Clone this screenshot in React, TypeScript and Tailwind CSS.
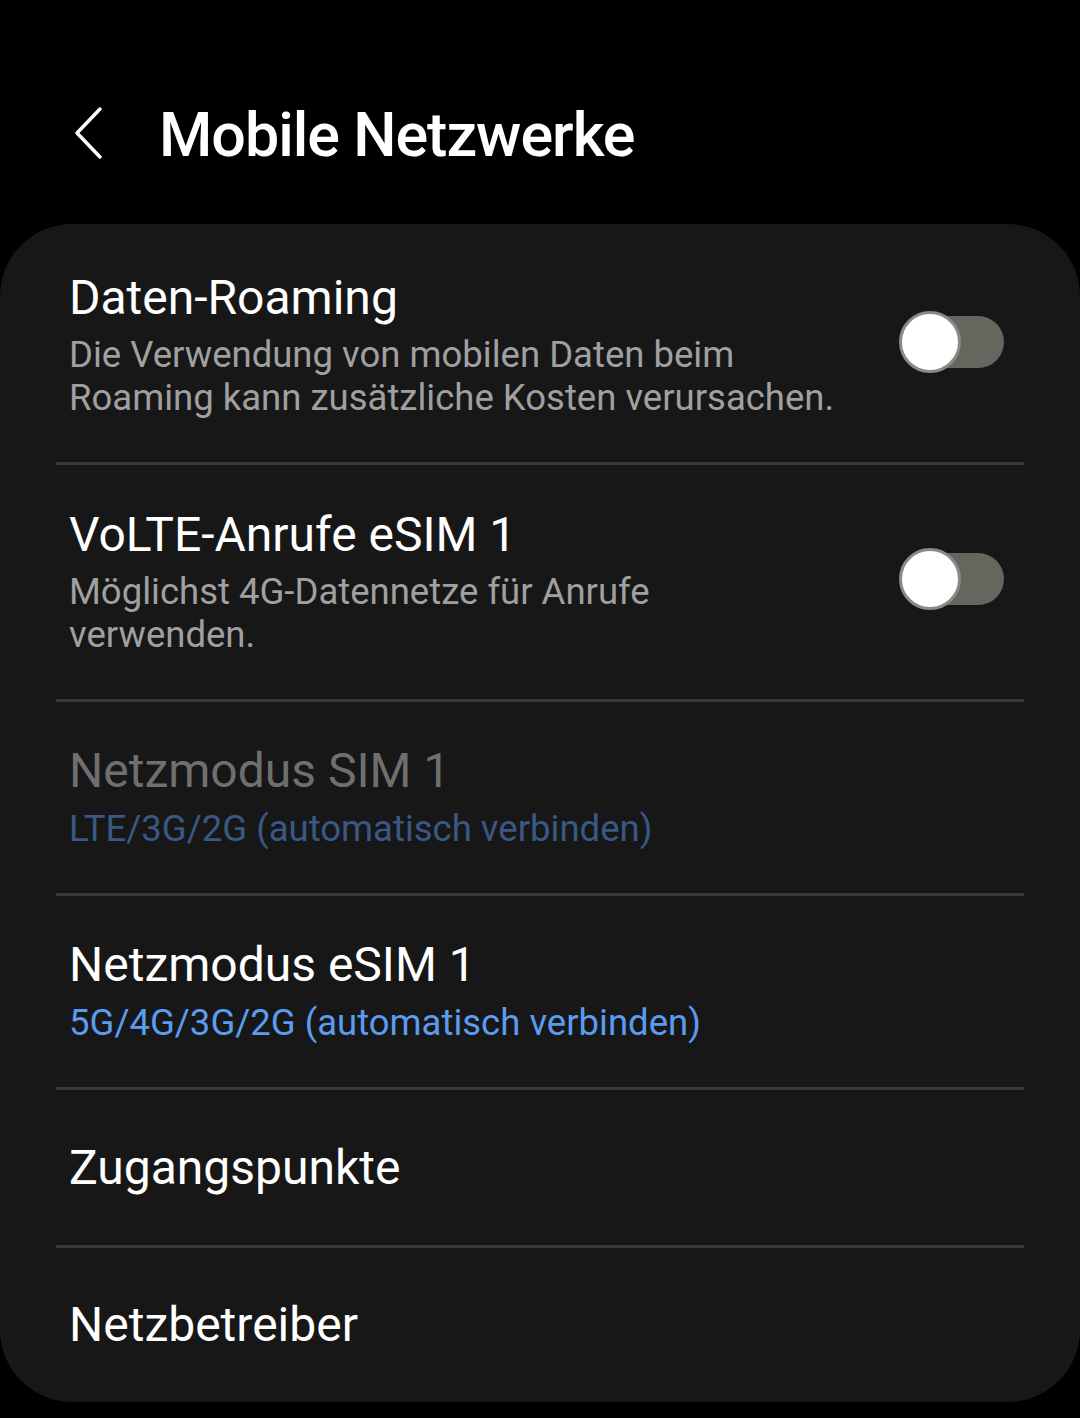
export default function App() {
  return (
    <div className="min-h-[1418px] w-[1080px] bg-black font-['Roboto',sans-serif]">
      <div className="flex h-[224px] items-start pl-[72px] pt-[104px]">
        <svg width="34" height="54" viewBox="0 0 34 54" className="mt-[2px]">
          <path d="M28 3 L5 27 L28 51" fill="none" stroke="#fff" strokeWidth="3.5" strokeLinecap="round" strokeLinejoin="round" />
        </svg>
        <h1 className="ml-[53px] text-[61px] font-medium leading-[62px] tracking-[-1px] text-white">Mobile Netzwerke</h1>
      </div>

      <div className="rounded-[72px] bg-[#171717]">
        <ToggleRow
          title="Daten-Roaming"
          lines={["Die Verwendung von mobilen Daten beim", "Roaming kann zusätzliche Kosten verursachen."]}
          rowClass="h-[238px] pt-[47px]"
        />
        <Divider />
        <ToggleRow
          title="VoLTE-Anrufe eSIM 1"
          lines={["Möglichst 4G-Datennetze für Anrufe", "verwenden."]}
          rowClass="h-[234px] pt-[43px]"
        />
        <Divider />
        <div className="h-[191px] px-[69px] pt-[42px]">
          <p className="text-[48px] leading-[54px] text-[#6f6f6f]">Netzmodus SIM 1</p>
          <p className="mt-[9px] text-[36.5px] leading-[44px] text-[#3a5884]">LTE/3G/2G (automatisch verbinden)</p>
        </div>
        <Divider />
        <div className="h-[191px] px-[69px] pt-[42px]">
          <p className="text-[48px] leading-[54px] text-white">Netzmodus eSIM 1</p>
          <p className="mt-[9px] text-[36.5px] leading-[44px] text-[#5a9cf0]">5G/4G/3G/2G (automatisch verbinden)</p>
        </div>
        <Divider />
        <div className="flex h-[155px] items-center px-[69px]">
          <p className="text-[48px] leading-[54px] text-white">Zugangspunkte</p>
        </div>
        <Divider />
        <div className="flex h-[154px] items-center px-[69px]">
          <p className="text-[48px] leading-[54px] text-white">Netzbetreiber</p>
        </div>
      </div>
    </div>
  );
}

function Divider() {
  return <div className="mx-[56px] h-[3px] bg-[#3a3a3a]" />;
}

function ToggleRow({ title, lines, rowClass }: { title: string; lines: string[]; rowClass: string }) {
  return (
    <div className={`flex items-start justify-between pr-[76px] pl-[69px] ${rowClass}`}>
      <div>
        <p className="text-[48px] leading-[54px] text-white">{title}</p>
        <p className="mt-[8px] text-[36.5px] leading-[43px] text-[#a0a0a0]">
          {lines[0]}
          <br />
          {lines[1]}
        </p>
      </div>
      <Switch />
    </div>
  );
}

function Switch() {
  return (
    <div className="relative mt-[45px] h-[52px] w-[104px] shrink-0 rounded-full bg-[#66665f]">
      <div className="absolute top-[-5px] left-[-1px] h-[62px] w-[62px] rounded-full border-[3px] border-[#8a8a8a] bg-white" />
    </div>
  );
}
